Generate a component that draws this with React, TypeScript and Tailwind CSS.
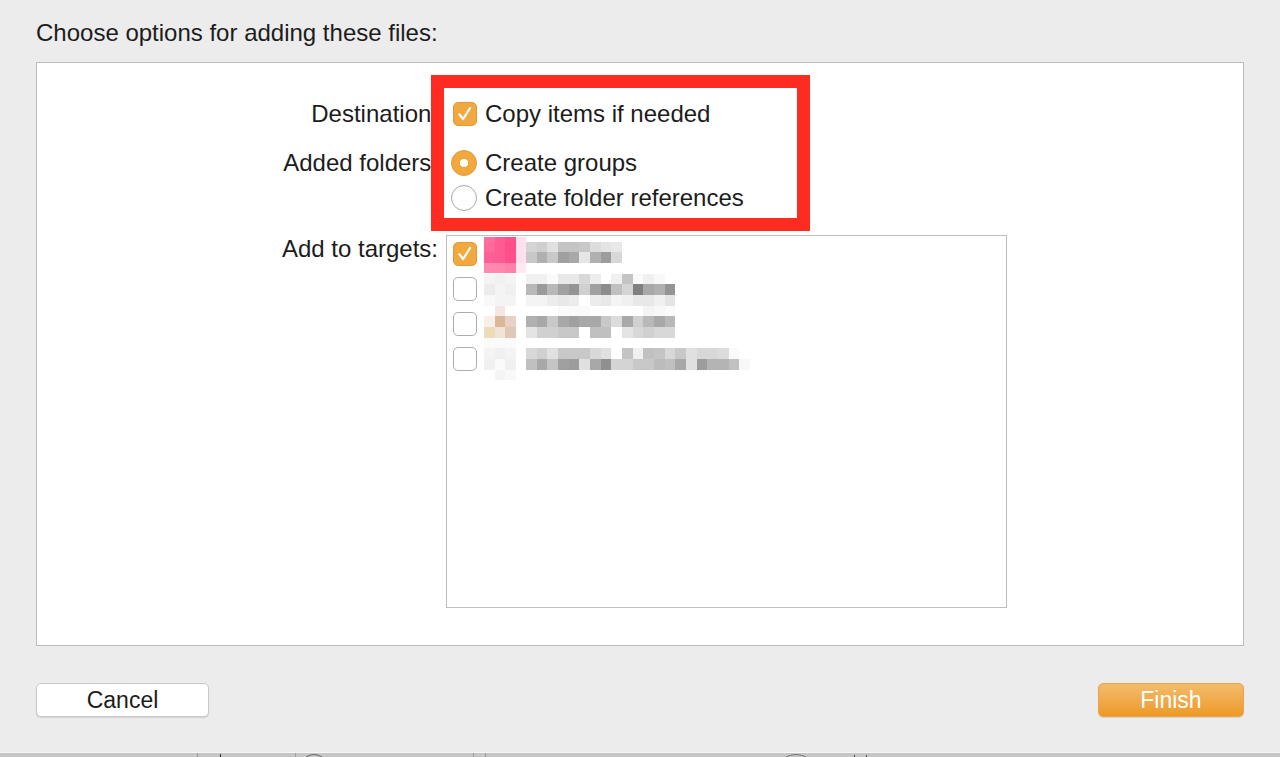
import React from "react";

// blurred target rows: each entry is one band of the mosaic
// colours: 2 hex digits = gray, 6 = full hex, "" = nothing
type Band = { y: number; h: number; icon: string[]; text: string[] };

const CELL = 10.67;

const BANDS: Band[] = [
  { y: 0.3, h: 4.4, icon: ["ff6f9d", "ff5c92", "ff4f8c", "ffe0ec"], text: [] },
  { y: 4.7, h: 10.6, icon: ["ff6a99", "ff5a91", "ff4c8a", "ffe0ec"], text: ["d4", "cf", "e0", "c4", "c4", "c8", "dc", "e4", "e8"] },
  { y: 15.3, h: 10.7, icon: ["ff5f94", "ff5a91", "ff4f8c", "ffe0ec"], text: ["c8", "b0", "c8", "a0", "a8", "e6", "b0", "9c", "d8"] },
  { y: 26, h: 10.3, icon: ["ff8aaf", "ff86ad", "ff80a8", "ffe8f0"], text: [] },
  { y: 36.7, h: 10.6, icon: ["f4", "f0", "f4", ""], text: ["f0", "f0", "fa", "e8", "e8", "d8", "ec", "", "f0", "c4", "fa", "f0", "f8"] },
  { y: 47.3, h: 10.7, icon: ["ec", "f4", "f0", ""], text: ["b8", "9a", "b8", "a0", "94", "d0", "a0", "8c", "c0", "d4", "80", "a8", "b0", "94"] },
  { y: 58, h: 10.7, icon: ["f8", "f4", "f4", ""], text: ["f4", "f4", "ec", "e8", "ec", "", "ec", "e8", "f4", "f0", "e8", "e8", "f0", "e4"] },
  { y: 68.7, h: 10.6, icon: ["", "f6e6e2", "", ""], text: ["", "", "", "fa", "fa", "fa", "", "", "", "", "", "f4", "f8", "fa"] },
  { y: 79.3, h: 10.7, icon: ["f8f0e8", "d8b898", "e8d0c4", ""], text: ["b0", "a8", "c8", "a8", "a0", "a8", "a8", "c8", "dc", "a8", "d0", "b8", "a8", "b8"] },
  { y: 90, h: 10.7, icon: ["ecdcb8", "f0e4d8", "e0c8b8", ""], text: ["e4", "d0", "d0", "c8", "c8", "", "c0", "c0", "", "e4", "d8", "d0", "d8", "d8"] },
  { y: 100.7, h: 10.6, icon: ["fa", "fa", "fa", ""], text: [] },
  { y: 111.3, h: 10.7, icon: ["f4", "f0", "f4", ""], text: ["d8", "d0", "e0", "c8", "c8", "c8", "d8", "e0", "", "c4", "f0", "c0", "c4", "d8", "c8", "e0", "d8", "d8", "dc", "fa"] },
  { y: 122, h: 10.7, icon: ["f0", "fa", "f0", ""], text: ["c0", "a8", "c4", "a0", "9c", "e0", "a8", "90", "d4", "d4", "c8", "c8", "bc", "c0", "a8", "e0", "9c", "b4", "b4", "c0", "f8"] },
  { y: 132.7, h: 10.6, icon: ["", "f4", "f8", ""], text: [] },
];

const col = (c: string) => (c.length === 2 ? `#${c}${c}${c}` : `#${c}`);

function Mosaic() {
  return (
    <svg width={270} height={146} className="block shrink-0" shapeRendering="crispEdges">
      {BANDS.map((b, i) => (
        <g key={i}>
          {b.icon.map((c, j) =>
            c ? (
              <rect key={`i${j}`} x={j === 3 ? 32 : j * CELL} y={b.y} width={j === 3 ? 10 : CELL} height={b.h} fill={col(c)} />
            ) : null
          )}
          {b.text.map((c, j) =>
            c ? <rect key={`t${j}`} x={42 + j * CELL} y={b.y} width={CELL} height={b.h} fill={col(c)} /> : null
          )}
        </g>
      ))}
    </svg>
  );
}

function Checkbox({ on }: { on?: boolean }) {
  if (on) {
    return (
      <span className="block h-6 w-6 shrink-0 rounded-[5px] border border-[#e29a38] bg-[#f0a83f]">
        <svg viewBox="0 0 24 24" className="h-full w-full">
          <path d="M6 12.5 L10 17.5 L17.5 5.5" fill="none" stroke="white" strokeWidth="2.4" strokeLinecap="round" strokeLinejoin="round" />
        </svg>
      </span>
    );
  }
  return <span className="block h-6 w-6 shrink-0 rounded-[5px] border border-[#adadad] bg-white" />;
}

function Radio({ on }: { on?: boolean }) {
  if (on) {
    return (
      <span className="flex h-[26px] w-[26px] shrink-0 items-center justify-center rounded-full border border-[#e29a38] bg-[#f0a83f]">
        <span className="block h-2 w-2 rounded-full bg-white" />
      </span>
    );
  }
  return <span className="block h-[26px] w-[26px] shrink-0 rounded-full border border-[#a9a9a9] bg-white" />;
}

function BottomStrip() {
  return (
    <svg width={1280} height={5} className="block" shapeRendering="crispEdges">
      <rect x={0} y={0} width={1280} height={1} fill="#f7f7f7" />
      <rect x={0} y={1} width={1280} height={4} fill="#c6c6c6" />
      <rect x={197} y={1} width={1} height={4} fill="#9a9a9a" />
      <rect x={220} y={2} width={1} height={3} fill="#333" />
      <rect x={295} y={1} width={1} height={4} fill="#a0a0a0" />
      <rect x={473} y={1} width={1} height={4} fill="#9a9a9a" />
      <rect x={485} y={1} width={1} height={4} fill="#9a9a9a" />
      <rect x={854} y={3} width={1} height={2} fill="#444" />
      <rect x={866} y={3} width={1} height={2} fill="#444" />
      <path d="M306 5 Q314 0 322 5" fill="none" stroke="#666" strokeWidth={1} shapeRendering="auto" />
      <path d="M786 5 Q796 0 806 5" fill="none" stroke="#777" strokeWidth={1} shapeRendering="auto" />
    </svg>
  );
}

export default function App() {
  return (
    <div className="relative flex h-[757px] w-[1280px] flex-col overflow-hidden bg-[#ececec] font-['Liberation_Sans',Arial,sans-serif] text-[24px] leading-6 text-[#1c1c1c]">
      <div className="pl-[36px] pt-[21px]">Choose options for adding these files:</div>

      <div className="ml-[36px] mt-[17px] h-[584px] w-[1208px] border border-[#bcbcbc] bg-white pt-[38px]">
        <div className="flex h-[25px] items-center">
          <div className="w-[401px] text-right">Destination:</div>
          <div className="ml-[8px] flex items-center gap-[8px] pl-[7px]">
            <Checkbox on />
            <span>Copy items if needed</span>
          </div>
        </div>

        <div className="mt-[24px] flex items-start">
          <div className="flex h-[26px] w-[401px] items-center justify-end">Added folders:</div>
          <div className="ml-[8px] flex flex-col gap-[9px] pl-[5px]">
            <div className="flex h-[26px] items-center gap-[8px]">
              <Radio on />
              <span>Create groups</span>
            </div>
            <div className="flex h-[26px] items-center gap-[8px]">
              <Radio />
              <span>Create folder references</span>
            </div>
          </div>
        </div>

        <div className="mt-[24px] flex items-start">
          <div className="w-[401px] pt-[2px] text-right">Add to targets:</div>
          <div className="ml-[8px] flex h-[373px] w-[561px] items-start border border-[#bdbdbd] bg-white pl-[6px] pt-[1px]">
            <div className="flex flex-col gap-[11px] pt-[5px]">
              <Checkbox on />
              <Checkbox />
              <Checkbox />
              <Checkbox />
            </div>
            <div className="ml-[7px]">
              <Mosaic />
            </div>
          </div>
        </div>
      </div>

      <div className="mt-[37px] flex h-[34px] items-center justify-between px-[36px]">
        <button className="h-[34px] w-[173px] rounded-[5px] border border-[#c9c9c9] bg-white text-[23px] text-[#1c1c1c] shadow-[0_1px_1px_rgba(0,0,0,0.12)]">
          Cancel
        </button>
        <button className="h-[34px] w-[146px] rounded-[5px] border border-[#e9a450] bg-linear-to-b from-[#f2bc6a] to-[#ee9922] text-[23px] text-white shadow-[0_1px_1px_rgba(0,0,0,0.1)]">
          Finish
        </button>
      </div>

      <div className="mt-[35px]">
        <BottomStrip />
      </div>

      {/* red annotation frame */}
      <div className="pointer-events-none absolute left-[431px] top-[75px] h-[156px] w-[379px] border-[13px] border-[#fd2b20]" />
    </div>
  );
}
